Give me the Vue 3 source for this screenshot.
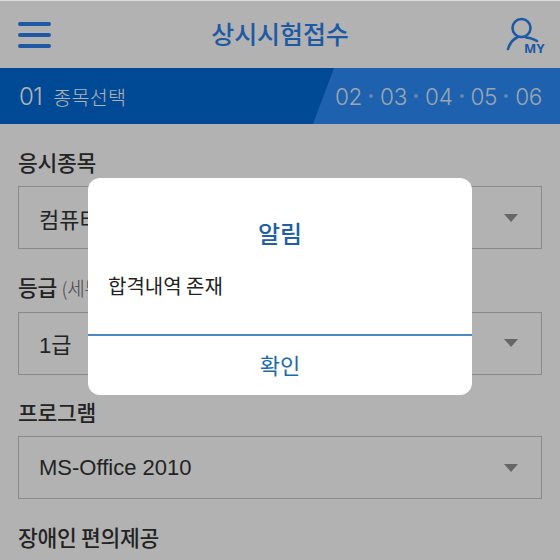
<script setup>
const fields = [
  { key: 'a', label: '응시종목', note: '', value: '컴퓨터활용능력' },
  { key: 'b', label: '등급', note: '(세부종목)', value: '1급' },
  { key: 'c', label: '프로그램', note: '', value: 'MS-Office 2010' },
]
const steps = ['02', '03', '04', '05', '06']
</script>

<template>
  <div class="page">
    <header class="top">
      <div class="burger"><i></i><i></i><i></i></div>
      <h1 class="title">상시시험접수</h1>
      <div class="my">
        <svg width="40" height="42" viewBox="0 0 40 42" fill="none">
          <circle cx="16.5" cy="12" r="9" stroke="#2c80ec" stroke-width="2.6"/>
          <path d="M3 33 C4.5 28 8 23.5 12 21.5" stroke="#2c80ec" stroke-width="2.6" stroke-linecap="round"/>
          <path d="M21 21.5 C25 22 29 23 32 25" stroke="#2c80ec" stroke-width="2.6" stroke-linecap="round"/>
        </svg>
        <span class="my-text">MY</span>
      </div>
    </header>

    <div class="stepbar">
      <div class="current"><span class="num">01</span><span class="name">종목선택</span></div>
      <div class="steps">
        <template v-for="(s, i) in steps" :key="s">
          <i v-if="i" class="dot"></i>
          <span class="step">{{ s }}</span>
        </template>
      </div>
    </div>

    <main class="form">
      <section v-for="f in fields" :key="f.key" class="group">
        <div class="label">{{ f.label }} <span v-if="f.note" class="note">{{ f.note }}</span></div>
        <div class="select"><span>{{ f.value }}</span><b class="caret"></b></div>
      </section>
      <div class="label">장애인 편의제공</div>
    </main>

    <div class="overlay">
      <div class="dialog">
        <div class="dlg-title">알림</div>
        <div class="dlg-body">합격내역 존재</div>
        <div class="dlg-btn">확인</div>
      </div>
    </div>
  </div>
</template>

<style>
html, body { margin: 0; padding: 0; }
</style>

<style scoped>
.page {
  position: relative;
  width: 560px;
  height: 560px;
  overflow: hidden;
  background: #ffffff;
  font-family: "Liberation Sans", "Noto Sans CJK KR", sans-serif;
  color: #333;
}
.top {
  box-sizing: border-box;
  height: 68px;
  border-top: 1px solid #dcdcdc;
  display: flex;
  align-items: center;
  justify-content: center;
  position: relative;
}
.burger {
  position: absolute;
  left: 18px;
  top: 21px;
  width: 33px;
  display: flex;
  flex-direction: column;
  gap: 7px;
}
.burger i {
  display: block;
  height: 4px;
  border-radius: 2px;
  background: #2c80ec;
}
.title {
  margin: 0 0 3px;
  font-size: 25px;
  font-weight: 500;
  letter-spacing: -0.1px;
  color: #2c80ec;
}
.my {
  position: absolute;
  left: 505px;
  top: 15px;
  width: 40px;
  height: 42px;
}
.my svg { display: block; }
.my-text {
  position: absolute;
  left: 19px;
  top: 24px;
  font-family: "Open Sans", sans-serif;
  font-size: 13px;
  font-weight: 700;
  line-height: 16px;
  letter-spacing: 0.2px;
  color: #2c80ec;
}
.stepbar {
  height: 56px;
  background: #0069d6;
  display: flex;
  justify-content: space-between;
  color: #fff;
}
.current {
  display: flex;
  align-items: center;
  padding-left: 19px;
  gap: 11px;
}
.num {
  font-family: "Inter", sans-serif;
  font-size: 24px;
  font-weight: 300;
  letter-spacing: -0.5px;
}
.name {
  font-family: "Noto Sans CJK KR", sans-serif;
  font-size: 19.5px;
  font-weight: 300;
  letter-spacing: 0.3px;
}
.steps {
  width: 247px;
  box-sizing: border-box;
  background: #2c8cf9;
  clip-path: polygon(21px 0, 100% 0, 100% 100%, 0 100%);
  display: flex;
  align-items: center;
  justify-content: flex-end;
  gap: 7px;
  padding-right: 18px;
  font-family: "Inter", sans-serif;
  font-size: 22.5px;
  font-weight: 300;
}
.step { color: rgba(255, 255, 255, 0.85); letter-spacing: -0.3px; }
.dot {
  display: block;
  width: 4px;
  height: 4px;
  border-radius: 50%;
  background: rgba(255, 255, 255, 0.45);
}
.form {
  padding: 23px 18px 0;
}
.group {
  margin-bottom: 22.5px;
}
.label {
  font-family: "Noto Sans CJK KR", sans-serif;
  font-size: 21.5px;
  font-weight: 500;
  line-height: 30px;
  letter-spacing: -0.3px;
  color: #333;
}
.note {
  font-size: 19px;
  font-weight: 300;
  color: #666;
}
.select {
  box-sizing: border-box;
  height: 63px;
  margin-top: 9px;
  border: 1px solid #c5c5c5;
  padding: 0 23px 0 20px;
  display: flex;
  align-items: center;
  justify-content: space-between;
  font-size: 22px;
  color: #333;
}
.caret {
  width: 0;
  height: 0;
  border-left: 7px solid transparent;
  border-right: 7px solid transparent;
  border-top: 8px solid #929292;
}
.overlay {
  position: absolute;
  inset: 1px 0 0;
  background: rgba(0, 0, 0, 0.3);
}
.dialog {
  position: absolute;
  left: 88px;
  top: 177px;
  width: 384px;
  height: 217px;
  box-sizing: border-box;
  background: #fff;
  border-radius: 12px;
  display: flex;
  flex-direction: column;
}
.dlg-title {
  margin-top: 37px;
  height: 36px;
  line-height: 36px;
  text-align: center;
  font-family: "Noto Sans CJK KR", sans-serif;
  font-size: 24px;
  font-weight: 500;
  color: #1f5fa8;
}
.dlg-body {
  margin-top: 20px;
  padding-left: 20px;
  height: 30px;
  line-height: 30px;
  font-family: "Noto Sans CJK KR", sans-serif;
  font-size: 20px;
  color: #222;
}
.dlg-btn {
  margin-top: 33px;
  flex: 1;
  border-top: 2px solid #4a8ac0;
  display: flex;
  align-items: center;
  justify-content: center;
  padding-bottom: 4px;
  font-family: "Noto Sans CJK KR", sans-serif;
  font-size: 22px;
  color: #1a69ab;
}
</style>
